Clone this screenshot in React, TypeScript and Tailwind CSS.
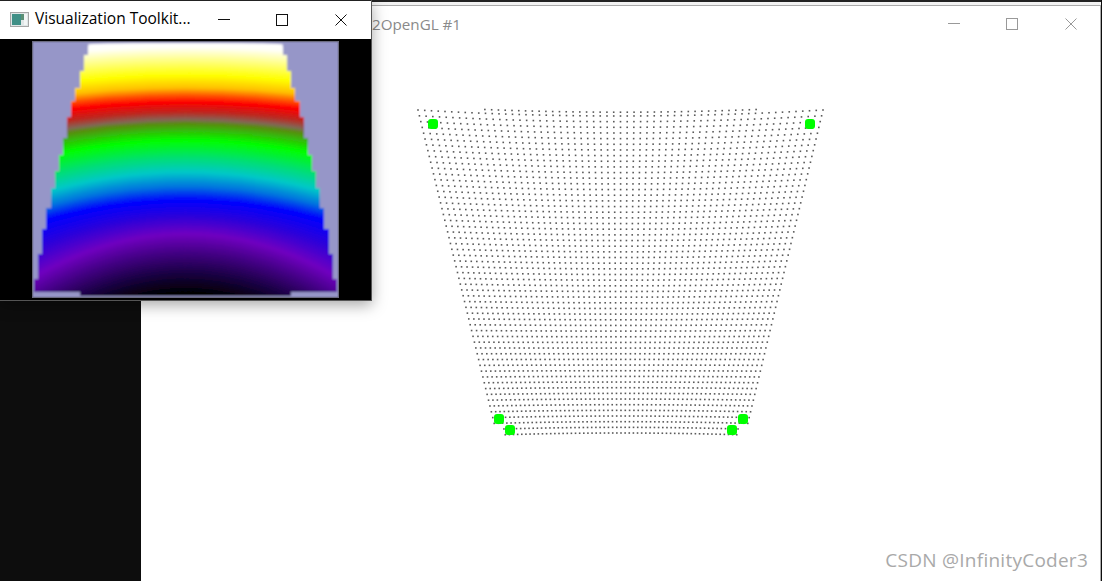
const stops: [number, number[]][] = [
  [123, [255, 255, 255]],
  [140, [255, 255, 250]],
  [180, [255, 255, 130]],
  [225, [255, 255, 0]],
  [262, [255, 190, 0]],
  [285, [255, 80, 0]],
  [305, [255, 0, 0]],
  [335, [190, 40, 32]],
  [358, [128, 105, 90]],
  [368, [90, 138, 16]],
  [420, [0, 255, 0]],
  [470, [0, 224, 112]],
  [515, [0, 200, 200]],
  [560, [0, 112, 224]],
  [600, [0, 0, 255]],
  [650, [48, 0, 216]],
  [700, [112, 0, 192]],
  [760, [64, 0, 128]],
  [820, [24, 0, 64]],
  [880, [0, 0, 0]],
  [900, [0, 0, 0]],
];

const sagStops: [number, number][] = [
  [123, 20],
  [300, 30],
  [515, 60],
  [600, 60],
  [700, 110],
  [800, 130],
  [900, 150],
];

function colorAt(y: number) {
  for (let i = 0; i < stops.length - 1; i++) {
    const [a, ca] = stops[i];
    const [b, cb] = stops[i + 1];
    if (y <= b) {
      const t = (y - a) / (b - a);
      return `rgb(${ca.map((c, k) => Math.round(c + (cb[k] - c) * t)).join(",")})`;
    }
  }
  return "rgb(0,0,0)";
}

function sagAt(y: number) {
  for (let i = 0; i < sagStops.length - 1; i++) {
    const [a, sa] = sagStops[i];
    const [b, sb] = sagStops[i + 1];
    if (y <= b) return sa + ((sb - sa) * (y - a)) / (b - a);
  }
  return 150;
}

const bands: { d: string; fill: string }[] = [];
for (let y = 123; y < 894; y += 3) {
  const e = y + sagAt(y) * (460 / 420) ** 2;
  bands.push({
    d: `M96 ${e} Q556 ${2 * y - e} 1016 ${e} V900 H96 Z`,
    fill: colorAt(y),
  });
}

const stepped =
  "265,130 265,165 252,165 252,215 240,215 240,265 227,265 227,305 215,305 215,352 203,352 203,415 190,415 190,465 177,465 177,515 165,515 165,565 153,565 153,625 140,625 140,687 127,687 127,762 115,762 115,838 103,838 103,875 240,875 240,887 873,887 873,875 1010,875 1010,838 998,838 998,762 985,762 985,687 972,687 972,625 960,625 960,565 947,565 947,515 935,515 935,465 922,465 922,415 910,415 910,352 898,352 898,305 885,305 885,265 873,265 873,215 860,215 860,165 848,165 848,130";

// sampled point grid, warped to the trapezoid
const cols = 60;
const rows = 56;
function gridPoint(u: number, v: number) {
  const left = 418 + (497 - 418) * v;
  const right = 823 + (745 - 823) * v;
  const bow = 1 - (2 * u - 1) ** 2;
  const y = 110 + (435 - 110) * v + bow * (6 * (1 - v) - 2 * v);
  return [left + (right - left) * u, y];
}

const points: number[][] = [];
for (let r = 0; r <= rows; r++) {
  for (let c = 0; c <= cols; c++) {
    const u = c / cols;
    const v = r / rows;
    // the lowest rows stop short of the side markers
    if (v > 0.98 && (u < 0.02 || u > 0.98)) continue;
    points.push(gridPoint(u, v));
  }
}
for (let c = 10; c <= cols - 10; c++) {
  points.push(gridPoint(c / cols, -0.012));
}

const markers = [
  [433, 124],
  [810, 124],
  [499, 419],
  [510, 430],
  [743, 419],
  [732, 430],
];

function WindowControls({ color, className }: { color: string; className: string }) {
  return (
    <svg width="130" height="14" viewBox="0 0 130 14" fill="none" stroke={color} strokeWidth="1" className={className}>
      <path d="M0 6.5H12" />
      <rect x="58.5" y="1.5" width="11" height="11" />
      <path d="M117.5 1.5L128.5 12.5M128.5 1.5L117.5 12.5" />
    </svg>
  );
}

export default function App() {
  return (
    <div className="relative flex h-[581px] w-[1102px] overflow-hidden bg-[#0d0d0d] font-['Open_Sans','Noto_Sans',sans-serif]">
      <div className="w-[141px] shrink-0" />
      <div className="flex flex-1 flex-col pr-[1px]">
        <div className="h-[2px] bg-[#222]" />
        <div className="h-[3px] bg-[#f2f2f2]" />
        <div className="flex flex-1 flex-col border-t border-r border-[#aaaaaa] bg-white">
          <div className="flex h-[33px] items-center justify-between pr-[22px] pl-[231px] pt-[4px]">
            <span className="text-[15.2px] text-[#8a8a8a]">2OpenGL #1</span>
            <WindowControls color="#999999" className="mb-[1px]" />
          </div>
          <svg width="959" height="540" viewBox="141 39 959 540" className="block">
            <defs>
              <filter id="dotBlur" x="0" y="0" width="100%" height="100%">
                <feGaussianBlur stdDeviation="0.55" />
              </filter>
              <filter id="markerBlur" x="-30%" y="-30%" width="160%" height="160%">
                <feGaussianBlur stdDeviation="0.6" />
              </filter>
            </defs>
            <g fill="#5a5a5a" filter="url(#dotBlur)">
              {points.map(([x, y], i) => (
                <rect key={i} x={x - 0.8} y={y - 0.8} width="1.6" height="1.6" />
              ))}
            </g>
            <g fill="#00ff00" filter="url(#markerBlur)">
              {markers.map(([x, y]) => (
                <rect key={`${x}-${y}`} x={x - 5} y={y - 5} width="10" height="10" rx="3" />
              ))}
            </g>
          </svg>
        </div>
      </div>

      <div className="absolute bottom-[9px] right-[14px] text-[19px] leading-6 tracking-[0.25px] text-[#a9a9a9]">
        CSDN @InfinityCoder3
      </div>

      <div className="absolute left-0 top-0 flex h-[301px] w-[372px] flex-col border-r border-b border-[#555] bg-black shadow-[0_4px_14px_rgba(0,0,0,0.35)]">
        <div className="h-[1px] bg-[#222]" />
        <div className="flex h-[38px] items-center bg-white pl-[10px] pr-[23px]">
          <svg width="19" height="15" viewBox="0 0 19 15" className="mb-[1px] shrink-0">
            <rect x="0.5" y="0.5" width="18" height="14" fill="#dfe6e6" stroke="#a6a6a6" />
            <rect x="2" y="2" width="9" height="11" fill="#3f8f86" />
            <rect x="11" y="2" width="3" height="6" fill="#5b8f74" />
            <rect x="14" y="2" width="3" height="11" fill="#f2f5f5" />
          </svg>
          <span className="mb-[2px] ml-[6px] text-[15.5px] text-black">Visualization Toolkit...</span>
          <WindowControls color="#111111" className="mb-[1px] ml-auto" />
        </div>
        <div className="flex-1 pl-[32px] pt-[2px]">
          <svg width="307" height="257" viewBox="96 123 921 771" className="block">
            <defs>
              <filter id="heatBlur" x="0" y="0" width="100%" height="100%">
                <feGaussianBlur stdDeviation="3" />
              </filter>
              <clipPath id="stepClip">
                <polygon points={stepped} />
              </clipPath>
            </defs>
            <g filter="url(#heatBlur)">
              <rect x="96" y="123" width="921" height="771" fill="#9696c8" />
              <g clipPath="url(#stepClip)">
                {bands.map((b, i) => (
                  <path key={i} d={b.d} fill={b.fill} />
                ))}
              </g>
            </g>
            <rect x="97.5" y="124.5" width="918" height="768" fill="none" stroke="#6b6b80" strokeWidth="3" />
          </svg>
        </div>
      </div>
    </div>
  );
}
